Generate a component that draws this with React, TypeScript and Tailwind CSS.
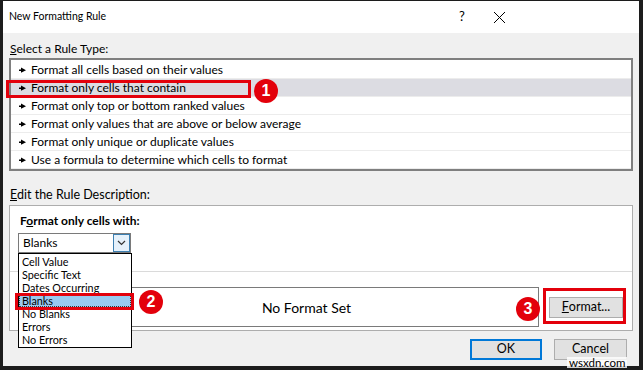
import React from "react";

const rules = [
  "Format all cells based on their values",
  "Format only cells that contain",
  "Format only top or bottom ranked values",
  "Format only values that are above or below average",
  "Format only unique or duplicate values",
  "Use a formula to determine which cells to format",
];

const options = [
  "Cell Value",
  "Specific Text",
  "Dates Occurring",
  "Blanks",
  "No Blanks",
  "Errors",
  "No Errors",
];

function Pointer() {
  return (
    <svg width="7" height="6" viewBox="0 0 7 6" className="shrink-0">
      <rect x="0" y="2.5" width="3" height="1.5" fill="#000" />
      <polygon points="2,0.5 7,3.2 2,5.8" fill="#000" />
    </svg>
  );
}

function Badge({ n }: { n: string }) {
  return (
    <div
      className="w-[24px] h-[24px] rounded-full bg-[#e3000b] text-white flex items-center justify-center text-[16px] font-bold leading-none"
      style={{ fontFamily: '"Liberation Sans", Arial, sans-serif' }}
    >
      {n}
    </div>
  );
}

export default function App() {
  return (
    <div
      className="relative w-[643px] h-[370px] bg-[#1c1c1c] pt-[1px] pl-[3px] pr-[4px] pb-[4px] text-black overflow-hidden"
      style={{ fontFamily: 'Lato, "Noto Sans", sans-serif' }}
    >
      <div className="flex flex-col w-full h-full bg-[#f0f0f0]">
        {/* Title bar */}
        <div className="h-[32px] bg-white flex items-center pl-[6px] text-[10.5px] shrink-0">
          <span className="flex-1">New Formatting Rule</span>
          <span className="w-[12px] text-[13px] mr-[22px]">?</span>
          <svg width="13" height="13" viewBox="0 0 13 13" className="mr-[133px]">
            <path d="M1 1 L12 12 M12 1 L1 12" stroke="#000" strokeWidth="1" />
          </svg>
        </div>

        <div className="flex flex-col px-[6px]">
          <div className="pt-[8px] h-[25px] leading-[16px] text-[12px] pl-[1px]">
            <span className="underline">S</span>elect a Rule Type:
          </div>
          <div className="h-[113px] bg-white border-2 border-[#7f7f7f] pt-[1px]">
            {rules.map((r, i) => (
              <div
                key={r}
                className={`h-[18px] flex items-center gap-[5px] pl-[8px] text-[12px] border-b border-[#ececec] ${
                  i === 1 ? "bg-[#dcdce2]" : ""
                }`}
              >
                <Pointer />
                <span>{r}</span>
              </div>
            ))}
          </div>

          <div className="mt-[16px] h-[16px] leading-[16px] text-[12.5px] pl-[1px]">
            <span className="underline">E</span>dit the Rule Description:
          </div>

          <div className="mt-[2px] h-[126px] bg-white border border-[#adadad] flex flex-col">
            <div className="pt-[7px] pl-[10px] leading-[16px] text-[12px] font-bold">
              F<span className="underline">o</span>rmat only cells with:
            </div>
            <div className="mt-[4px] ml-[8px] w-[113px] h-[20px] border border-[#7a7a7a] flex items-center bg-white">
              <span className="flex-1 pl-[4px] text-[12px]">Blanks</span>
              <div className="w-[17px] h-[18px] border border-[#3c7fb1] bg-[#e5f1fb] flex items-center justify-center">
                <svg width="9" height="6" viewBox="0 0 9 6">
                  <path d="M1 1 L4.5 4.5 L8 1" stroke="#333" strokeWidth="1.2" fill="none" />
                </svg>
              </div>
            </div>
            <div className="mt-[18px] border-t border-[#dadada]" />
            <div className="mt-[15px] flex items-center">
              <div className="ml-[10px] w-[519px] h-[40px] border border-[#7a7a7a] bg-white flex items-center justify-center text-[14px]">
                <span className="pl-[54px]">No Format Set</span>
              </div>
              <div className="ml-[10px] w-[74px] h-[21px] bg-[#e1e1e1] border border-[#adadad] flex items-center justify-center text-[12.5px]">
                <span className="underline">F</span>ormat...
              </div>
            </div>
          </div>

          <div className="mt-[8px] flex justify-end gap-[12px] pr-[6px]">
            <div className="w-[72px] h-[21px] bg-[#e1e1e1] border-2 border-[#0078d7] flex items-center justify-center text-[12.5px]">
              OK
            </div>
            <div className="w-[73px] h-[21px] bg-[#e1e1e1] border border-[#adadad] flex items-center justify-center text-[12.5px]">
              Cancel
            </div>
          </div>
        </div>
      </div>

      {/* Red box 1 and badge */}
      <div className="absolute left-[6px] top-[80px] w-[245px] h-[18px] border-[3px] border-[#e3000b]" />
      <div className="absolute left-[254px] top-[79px]">
        <Badge n="1" />
      </div>

      {/* Dropdown list */}
      <div className="absolute left-[18px] top-[253px] w-[114px] bg-white border border-black pt-[1px] pb-[1px]">
        {options.map((o) => (
          <div
            key={o}
            className={`h-[13px] leading-[13px] text-[10.8px] pl-[3px] overflow-hidden ${
              o === "Blanks" ? "bg-[#99c9ef] outline-1 outline-dotted outline-[#333] -outline-offset-1" : ""
            }`}
          >
            {o}
          </div>
        ))}
      </div>
      <div className="absolute left-[15px] top-[293px] w-[119px] h-[17px] border-[3px] border-[#e3000b]" />
      <div className="absolute left-[139px] top-[290px]">
        <Badge n="2" />
      </div>

      {/* Red box 3 */}
      <div className="absolute left-[543px] top-[288px] w-[83px] h-[36px] border-[3px] border-[#e3000b]" />
      <div className="absolute left-[516px] top-[297px]">
        <Badge n="3" />
      </div>

      {/* watermark */}
      <div className="absolute left-[567px] top-[357px] px-[2px] bg-white/80 text-[11.5px] leading-[11px]">
        wsxdn.com
      </div>
    </div>
  );
}
